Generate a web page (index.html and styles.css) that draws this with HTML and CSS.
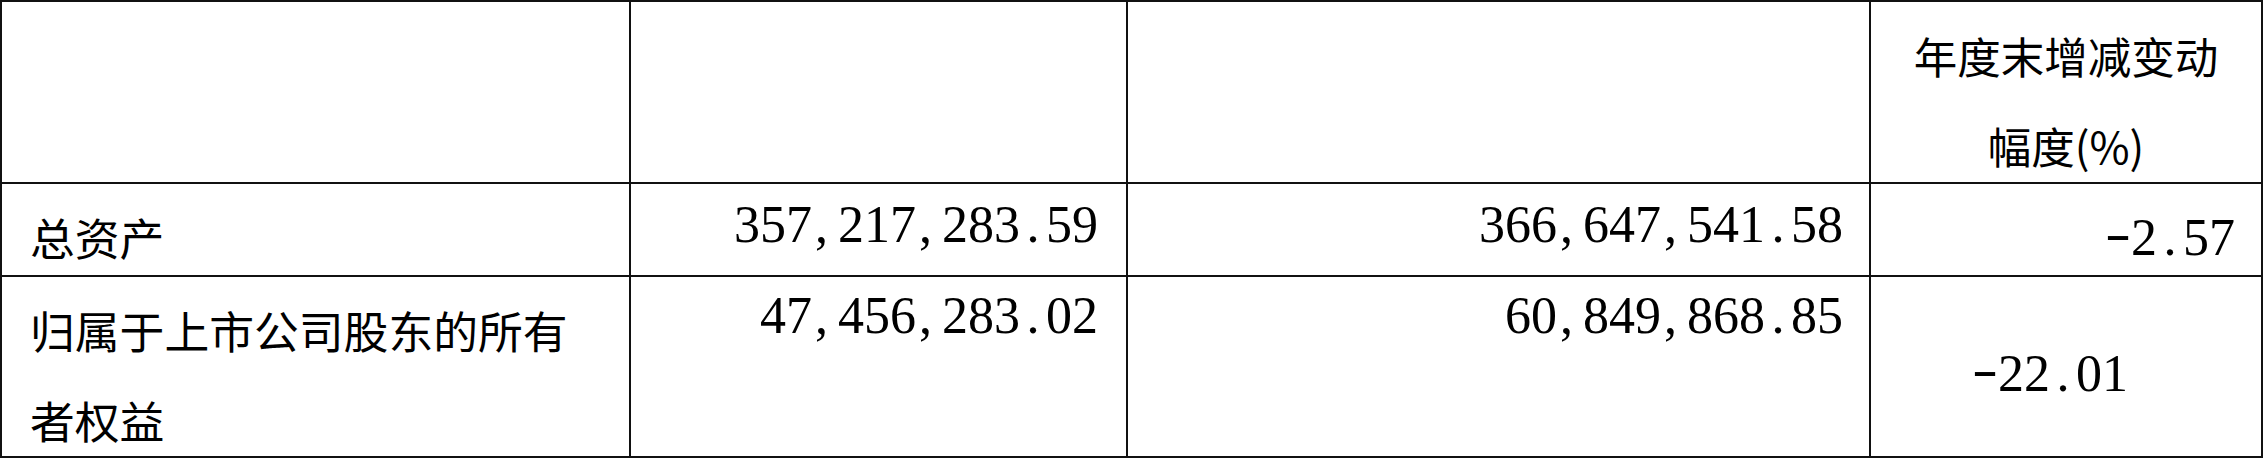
FILE: index.html
```html
<!DOCTYPE html>
<html lang="zh-CN">
<head>
<meta charset="utf-8">
<title>主要会计数据</title>
<link rel="stylesheet" href="styles.css">
</head>
<body>
<div class="sheet">
  <div class="cell"></div>
  <div class="cell"></div>
  <div class="cell"></div>
  <div class="cell head">年度末增减变动幅度(%)</div>

  <div class="cell label label-row2">总资产</div>
  <div class="cell num amt amt-row2 col2">357<span class="c">,</span>217<span class="c">,</span>283<span class="d">.</span>59</div>
  <div class="cell num amt amt-row2 col3">366<span class="c">,</span>647<span class="c">,</span>541<span class="d">.</span>58</div>
  <div class="cell num pct pct-row2"><span class="m">-</span>2<span class="d">.</span>57</div>

  <div class="cell label label-row3">归属于上市公司股东的所有者权益</div>
  <div class="cell num amt amt-row3 col2">47<span class="c">,</span>456<span class="c">,</span>283<span class="d">.</span>02</div>
  <div class="cell num amt amt-row3 col3">60<span class="c">,</span>849<span class="c">,</span>868<span class="d">.</span>85</div>
  <div class="cell num pct pct-row3"><span class="m">-</span>22<span class="d">.</span>01</div>
</div>
</body>
</html>
```

FILE: styles.css
```css
html, body {
  margin: 0;
  padding: 0;
  background: #fff;
}

.sheet {
  display: grid;
  grid-template-columns: 627px 495px 741px 390px;
  grid-template-rows: 180px 91px 179px;
  gap: 2px;
  padding: 2px;
  background: #111;
  width: max-content;
}

.cell {
  background: #fff;
  color: #000;
}

.head {
  font-family: "Noto Sans CJK SC", sans-serif;
  font-size: 43.5px;
  line-height: 90px;
  text-align: center;
  padding: 9px 30px 0 30px;
}

.label {
  font-family: "Noto Sans CJK SC", sans-serif;
  font-size: 44.8px;
  line-height: 90px;
  padding: 8px 40px 0 28px;
}

.num {
  font-family: "Liberation Serif", "Times New Roman", serif;
  font-size: 52px;
  line-height: 60px;
  white-space: nowrap;
}

.amt {
  text-align: right;
}

.col2 {
  padding-right: 28px;
}

.col3 {
  padding-right: 26px;
}

.amt-row2 {
  padding-top: 11px;
}

.amt-row3 {
  padding-top: 9px;
}

.pct-row2 {
  text-align: right;
  padding: 24px 26px 0 0;
}

.pct-row3 {
  text-align: center;
  padding: 67px 32px 0 0;
}

.c,
.d,
.m {
  display: inline-block;
  width: 26px;
}

.c {
  text-align: left;
  padding-left: 3px;
  box-sizing: border-box;
}

.d {
  text-align: center;
}

.m {
  text-align: center;
  transform: translateY(-4px) scaleX(1.5);
}
```
